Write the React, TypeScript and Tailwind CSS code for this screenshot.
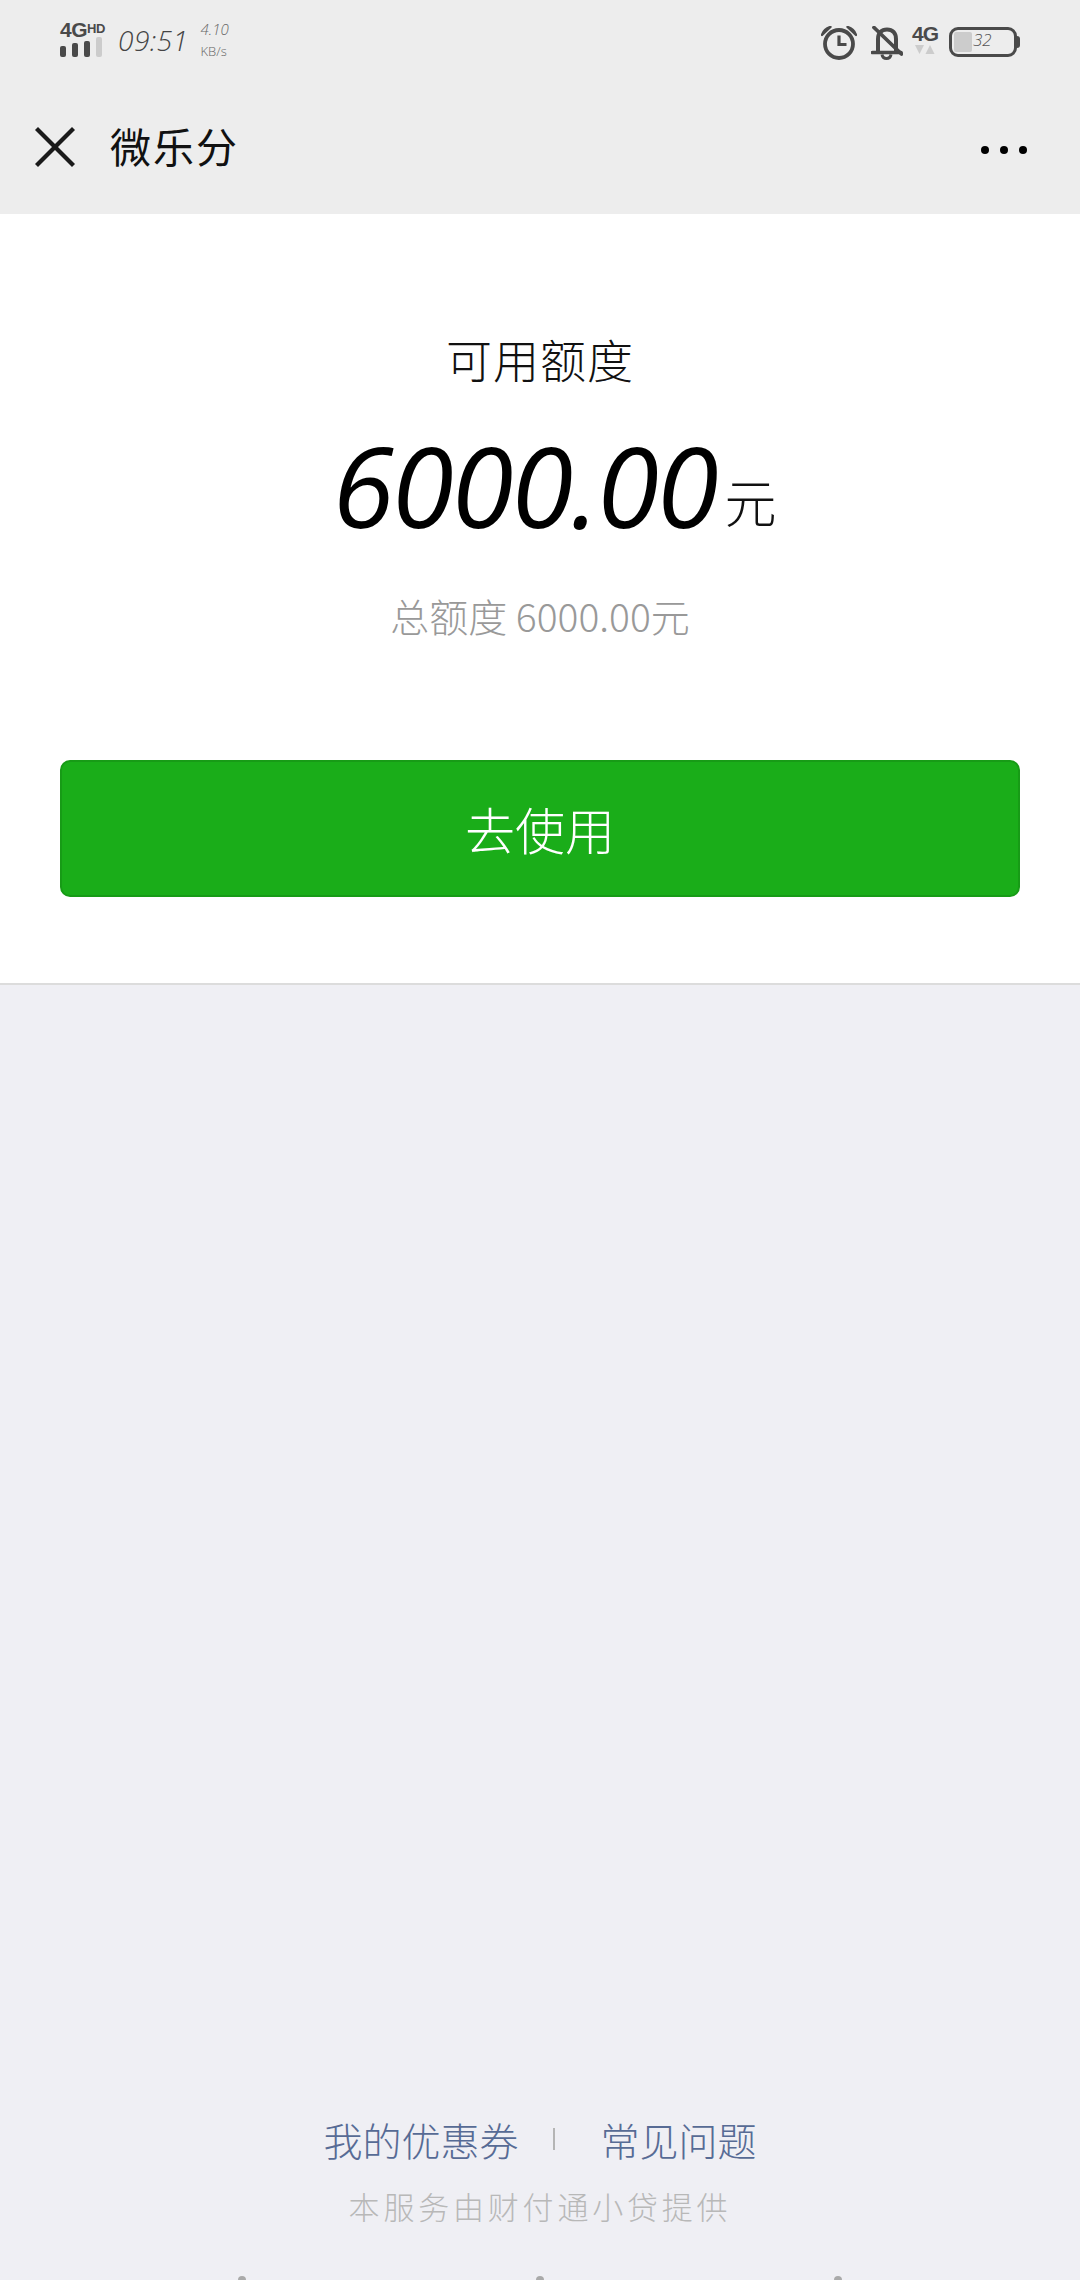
import { X } from "lucide-react"

const cjk = "font-['Noto_Sans_CJK_SC','Noto_Sans',sans-serif]"
const latin = "font-['Open_Sans','Noto_Sans_CJK_SC',sans-serif]"

function SignalBars() {
    return (
        <div className="flex items-end gap-[6px] h-[20px]">
            <span className="w-[6px] h-[11px] rounded-[2px] bg-[#4a4a4a]" />
            <span className="w-[6px] h-[14px] rounded-[2px] bg-[#4a4a4a]" />
            <span className="w-[6px] h-[16px] rounded-[2px] bg-[#4a4a4a]" />
            <span className="w-[6px] h-[20px] rounded-[2px] bg-[#cccccc]" />
        </div>
    )
}

function AlarmIcon() {
    return (
        <svg width="36" height="34" viewBox="0 0 36 34" fill="none">
            <circle cx="18" cy="18" r="14" stroke="#4a4a4a" strokeWidth="3.8" />
            <path d="M18 9.5V18.5H25.5" stroke="#4a4a4a" strokeWidth="3.2" />
            <path d="M1 9C2.5 4.5 5 2 9.5 1L1 9Z" fill="#4a4a4a" stroke="#4a4a4a" strokeWidth="2.4" strokeLinejoin="round" />
            <path d="M35 9C33.5 4.5 31 2 26.5 1L35 9Z" fill="#4a4a4a" stroke="#4a4a4a" strokeWidth="2.4" strokeLinejoin="round" />
        </svg>
    )
}

function BellOffIcon() {
    return (
        <svg width="32" height="34" viewBox="0 0 32 34" fill="none">
            <path d="M7 25V13C7 7 10.5 3.5 16 3.5C21.5 3.5 25 7 25 13V25" stroke="#4a4a4a" strokeWidth="4" />
            <path d="M1.5 26.5H30" stroke="#4a4a4a" strokeWidth="3.6" strokeLinecap="round" />
            <path d="M11 28.5C11.5 31.5 13.5 32.5 15.5 32.5C17.5 32.5 19.5 31.5 20 28.5" stroke="#4a4a4a" strokeWidth="3" />
            <path d="M3 1.5L30.5 28" stroke="#4a4a4a" strokeWidth="3.8" strokeLinecap="round" />
        </svg>
    )
}

function Battery() {
    return (
        <div className="flex items-center mt-[1px]">
            <div className="relative w-[68px] h-[30px] rounded-[9px] border-[3px] border-[#4a4a4a] p-[2px]">
                <div className="w-[18px] h-full rounded-[2px] bg-[#cccccc]" />
                <span className={`absolute left-[21px] top-[-1px] text-[17px] leading-[22px] italic font-light text-[#555555] ${latin}`}>32</span>
            </div>
            <span className="w-[3px] h-[12px] rounded-r-[3px] bg-[#4a4a4a]" />
        </div>
    )
}

function StatusBar() {
    return (
        <div className="flex items-start justify-between h-[80px] pl-[60px] pr-[60px] pt-[22px]">
            <div className="flex items-start">
                <div className="flex flex-col w-[45px]">
                    <span className="flex items-start h-[15px] leading-[15px] font-['Liberation_Sans',sans-serif] font-bold text-[#4a4a4a] tracking-[-0.5px]">
                        <span className="text-[21px]">4G</span>
                        <span className="text-[13px] leading-[13px]">HD</span>
                    </span>
                    <SignalBars />
                </div>
                <span className={`ml-[13px] mt-[3px] text-[28px] leading-[30px] italic font-light tracking-[0.5px] text-[#444444] ${latin}`}>09:51</span>
                <div className={`ml-[12px] flex flex-col text-[#666666] ${latin}`}>
                    <span className="text-[15px] leading-[14px] italic font-light">4.10</span>
                    <span className="mt-[8px] text-[13px] leading-[14px] font-light">KB/s</span>
                </div>
            </div>
            <div className="flex items-start pt-[4px]">
                <AlarmIcon />
                <div className="ml-[14px]">
                    <BellOffIcon />
                </div>
                <div className="ml-[9px] flex flex-col items-center w-[26px]">
                    <span className="h-[16px] text-[21px] leading-[16px] font-['Liberation_Sans',sans-serif] font-bold tracking-[-1px] text-[#4a4a4a]">4G</span>
                    <svg width="20" height="10" viewBox="0 0 20 10" className="mt-[3px]">
                        <path d="M0 0H9L4.5 9Z" fill="#cccccc" />
                        <path d="M10.5 9H19.5L15 0Z" fill="#cccccc" />
                    </svg>
                </div>
                <div className="ml-[11px]">
                    <Battery />
                </div>
            </div>
        </div>
    )
}

function NavBar() {
    return (
        <div className="flex items-center justify-between h-[134px] pl-[18px] pr-[53px]">
            <div className="flex items-center">
                <X size={74} strokeWidth={1.4} strokeLinecap="butt" color="#1a1a1a" />
                <span className={`ml-[18px] mb-[4px] text-[41px] leading-none tracking-[2px] text-[#111111] ${cjk}`}>微乐分</span>
            </div>
            <div className="flex items-center gap-[11px] pt-[5px]">
                <span className="w-[8px] h-[8px] rounded-full bg-black" />
                <span className="w-[8px] h-[8px] rounded-full bg-black" />
                <span className="w-[8px] h-[8px] rounded-full bg-black" />
            </div>
        </div>
    )
}

export default function App() {
    return (
        <div className="flex flex-col w-[1080px] h-[2280px] overflow-hidden bg-[#efeff4]">
            <header className="bg-[#ededed]">
                <StatusBar />
                <NavBar />
            </header>

            <section className="flex flex-col items-center bg-white h-[771px] border-b-2 border-[#dcdcdc] pt-[115px] px-[60px]">
                <h2 className={`text-[46px] leading-[58px] font-light tracking-[1px] text-[#111111] ${cjk}`}>可用额度</h2>
                <div className="mt-[28px] ml-[29px] flex items-end h-[140px]">
                    <span className={`text-[112px] leading-[140px] italic font-medium tracking-[-2px] text-black ${latin}`}>6000.00</span>
                    <span className={`ml-[8px] mb-[28px] text-[52px] leading-none font-light text-[#111111] ${cjk}`}>元</span>
                </div>
                <p className={`mt-[37px] text-[39px] leading-[46px] font-light text-[#999999] ${cjk}`}>总额度 6000.00元</p>
                <button className={`mt-[122px] w-[960px] h-[137px] shrink-0 rounded-[10px] border-2 border-[#179b16] bg-[#1aad19] text-white text-[50px] font-light ${cjk}`}>
                    去使用
                </button>
            </section>

            <footer className="mt-auto flex flex-col items-center">
                <div className={`flex items-center h-[50px] text-[39px] leading-[50px] font-light text-[#576b95] ${cjk}`}>
                    <span>我的优惠券</span>
                    <span className="ml-[34px] w-[2px] h-[22px] bg-[#b5b5b5]" />
                    <span className="ml-[46px]">常见问题</span>
                </div>
                <p className={`mt-[21px] text-[31px] leading-[42px] font-light tracking-[3.8px] text-[#b8b8b8] ${cjk}`}>本服务由财付通小贷提供</p>
                <div className="flex justify-between w-[604px] mt-[49px] h-[4px] overflow-visible">
                    <span className="w-[8px] h-[8px] rounded-full bg-[#aaaaaa]" />
                    <span className="w-[8px] h-[8px] rounded-full bg-[#aaaaaa]" />
                    <span className="w-[8px] h-[8px] rounded-full bg-[#aaaaaa]" />
                </div>
            </footer>
        </div>
    )
}
